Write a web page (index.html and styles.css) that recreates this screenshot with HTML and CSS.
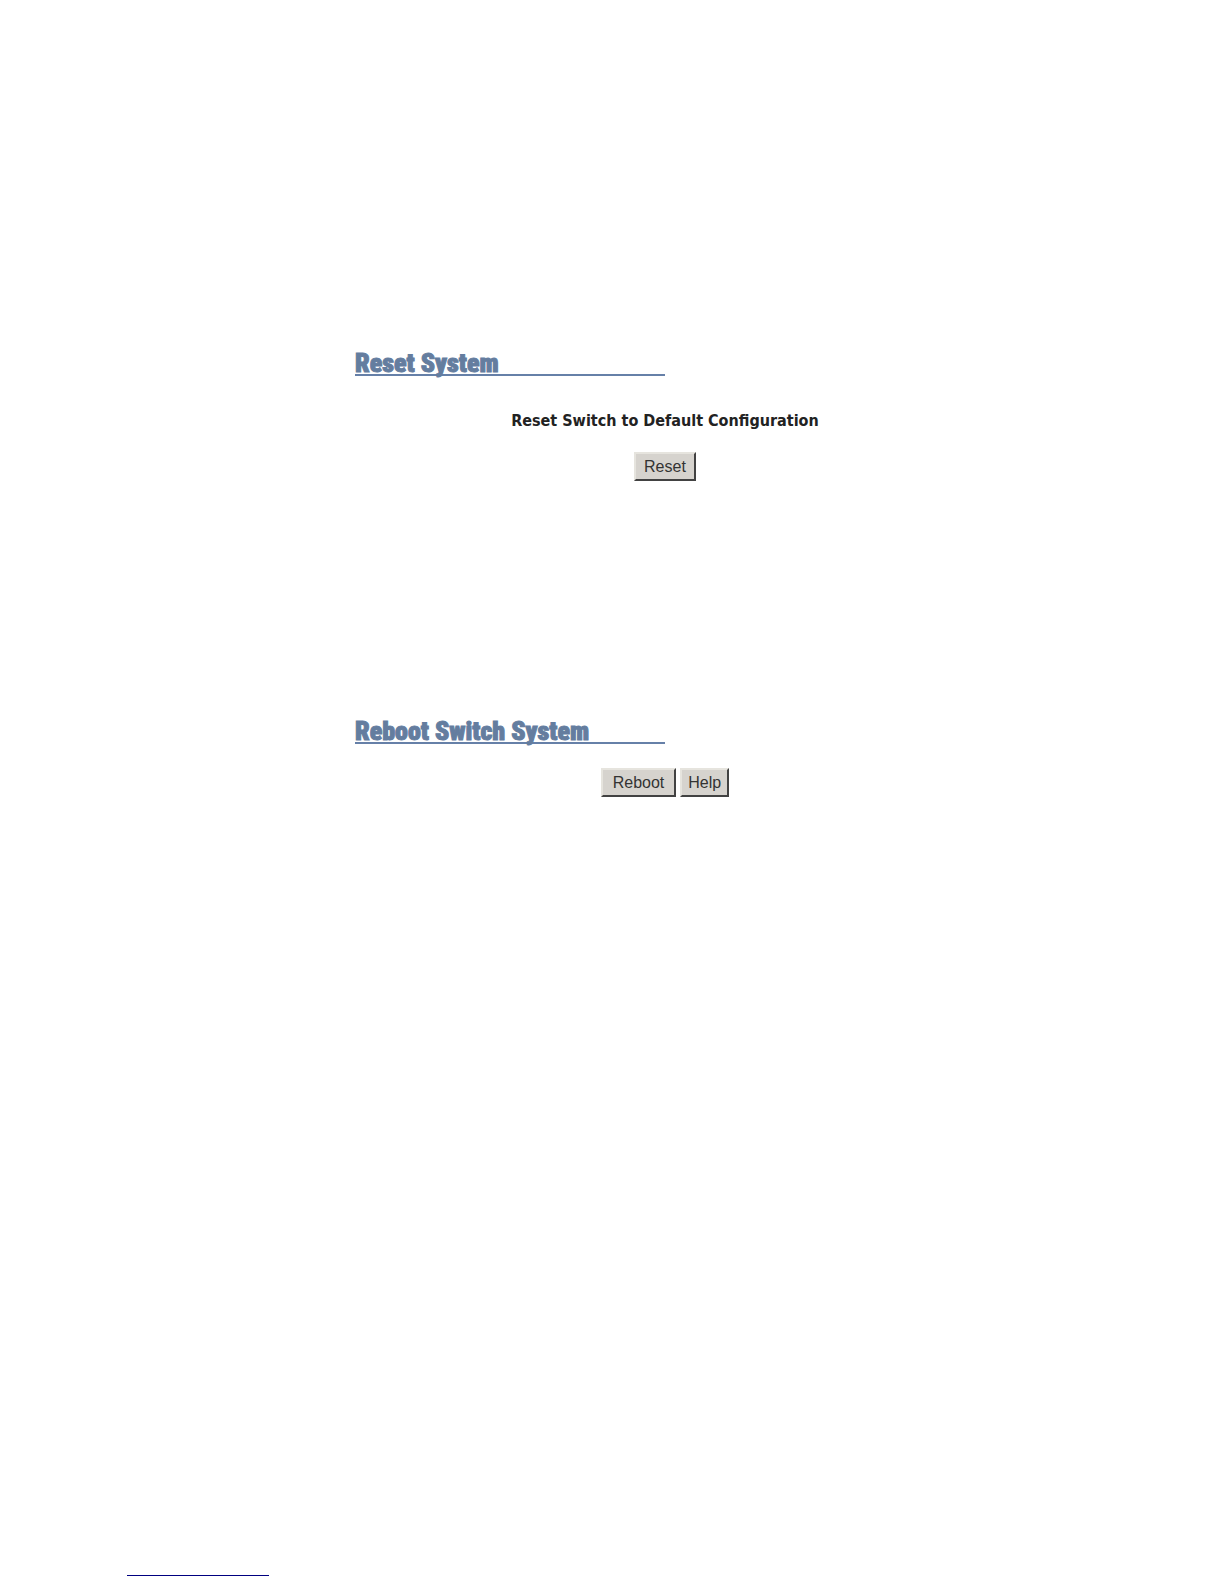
FILE: index.html
```
<!DOCTYPE html>
<html lang="en">
<head>
  <meta charset="UTF-8">
  <title>Switch System</title>
  <link rel="stylesheet" href="styles.css">
</head>
<body>
  <div class="page">
    <main class="container">
      <section class="section">
        <h1 class="title">Reset System</h1>
        <form class="panel">
          <label class="caption" for="resetButton">Reset Switch to Default Configuration</label>
          <button type="button" id="resetButton">Reset</button>
        </form>
      </section>

      <section class="section">
        <h1 class="title">Reboot Switch System</h1>
        <form class="actions">
          <button type="button" class="wide">Reboot</button>
          <button type="button" class="compact">Help</button>
        </form>
      </section>
    </main>

    <footer class="footer">
      <hr class="rule">
    </footer>
  </div>
</body>
</html>
```
FILE: styles.css
```
body {
  margin: 0;
  background: #ffffff;
  font-family: "Liberation Sans", Arial, sans-serif;
}

.page {
  display: flex;
  flex-direction: column;
  min-height: 100vh;
}

.container {
  flex: 1;
  width: 620px;
  max-width: 100%;
  margin-left: 29%;
  padding-top: 348px;
}

.section {
  margin-bottom: 235px;
}

/* section heading with the line under it */
.title {
  width: 50%;
  margin: 0;
  padding-top: 4px;
  border-bottom: 2px solid #6680a8;
  color: #647d9f;
  font-family: "Roboto Condensed", "Liberation Sans", sans-serif;
  font-size: 26px;
  font-weight: 900;
  line-height: 22px;
  white-space: nowrap;
  -webkit-text-stroke: 1px #647d9f;
}

.panel {
  display: flex;
  flex-direction: column;
  align-items: center;
  gap: 21px;
  padding-top: 35px;
}

.caption {
  color: #222222;
  font-family: "DejaVu Sans Condensed", Verdana, sans-serif;
  font-size: 16px;
  font-weight: bold;
  line-height: 20px;
}

.actions {
  display: flex;
  justify-content: center;
  gap: 4px;
  padding-top: 24px;
}

button {
  height: 29px;
  padding: 0 8px;
  border: 2px solid;
  border-color: #e6e4de #424242 #424242 #e6e4de;
  background: #d6d3ce;
  color: #333333;
  font-family: "Liberation Sans", Arial, sans-serif;
  font-size: 16px;
}

.wide {
  padding: 0 10px;
}

.compact {
  padding: 0 6px;
}

.footer {
  padding: 0 10.4% 8px;
}

.rule {
  width: 142px;
  height: 1px;
  margin: 0;
  border: 0;
  background: #000080;
}
```
